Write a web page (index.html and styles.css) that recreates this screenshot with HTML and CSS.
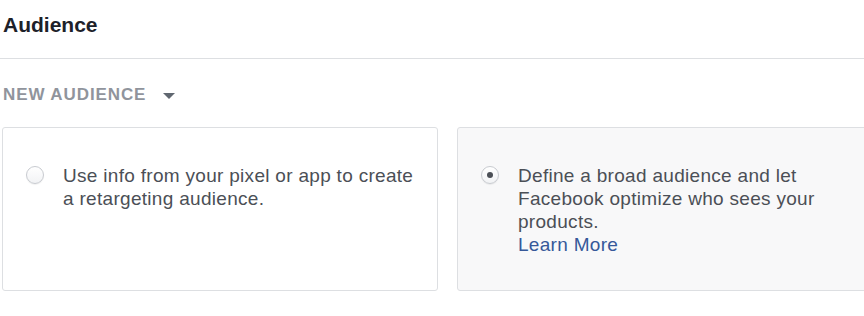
FILE: index.html
```html
<!DOCTYPE html>
<html lang="en">
<head>
    <meta charset="UTF-8">
    <title>Audience</title>
    <link rel="stylesheet" href="styles.css">
</head>
<body>

<div class="section">
    <div class="section-title">Audience</div>
    <div class="section-body">
        <div class="dropdown">
            <span class="dropdown-label">NEW AUDIENCE</span>
            <span class="caret"></span>
        </div>
        <div class="options">
            <label class="option">
                <span class="radio"></span>
                <span class="option-text">Use info from your pixel or app to create a retargeting audience.</span>
            </label>
            <label class="option option--selected">
                <span class="radio radio--checked"></span>
                <span class="option-text">Define a broad audience and let Facebook optimize who sees your products.<br><a class="learn-more" href="#">Learn More</a></span>
            </label>
        </div>
    </div>
</div>

</body>
</html>
```

FILE: styles.css
```css
body, html {
    margin: 0;
    padding: 0;
    height: 100%;
    overflow: hidden;
    background: #fff;
}
body {
    font-family: "Liberation Sans", Arial, sans-serif;
    color: #4b4f56;
}
.section-title {
    padding: 13px 3px 0 3px;
    height: 59px;
    box-sizing: border-box;
    border-bottom: 1px solid #dddfe2;
    font-size: 21px;
    font-weight: bold;
    color: #1d2129;
    line-height: 24px;
}
.section-body {
    padding: 0 0 0 2px;
}
.dropdown {
    display: flex;
    align-items: center;
    gap: 17px;
    height: 68px;
    padding-left: 1px;
    box-sizing: border-box;
    padding-top: 4px;
}
.dropdown-label {
    font-size: 17px;
    font-weight: bold;
    letter-spacing: 0.9px;
    color: #90949c;
}
.caret {
    width: 0;
    height: 0;
    border-left: 6px solid transparent;
    border-right: 6px solid transparent;
    border-top: 6px solid #606770;
    margin-top: 2px;
}
.options {
    display: grid;
    grid-template-columns: 436px 436px;
    gap: 19px;
}
.option {
    display: flex;
    align-items: flex-start;
    padding: 36px 20px 34px 23px;
    border: 1px solid #dddfe2;
    border-radius: 3px;
    background: #fff;
    cursor: pointer;
}
.option--selected {
    background: #f8f8f9;
}
.radio {
    flex: none;
    width: 18px;
    height: 18px;
    box-sizing: border-box;
    border-radius: 50%;
    border: 1px solid #c8cbd0;
    background: linear-gradient(#fff, #f2f3f5);
    box-shadow: 0 1px 1px rgba(0, 0, 0, 0.06);
    margin-top: 2px;
    position: relative;
}
.radio--checked:after {
    content: "";
    position: absolute;
    left: 5px;
    top: 5px;
    width: 6px;
    height: 6px;
    border-radius: 50%;
    background: #4b4f56;
}
.option-text {
    margin-left: 19px;
    max-width: 356px;
    font-size: 19px;
    letter-spacing: 0.3px;
    line-height: 23px;
    color: #4b4f56;
}
.learn-more {
    color: #365899;
    text-decoration: none;
}
.learn-more:hover {
    text-decoration: underline;
}
```
